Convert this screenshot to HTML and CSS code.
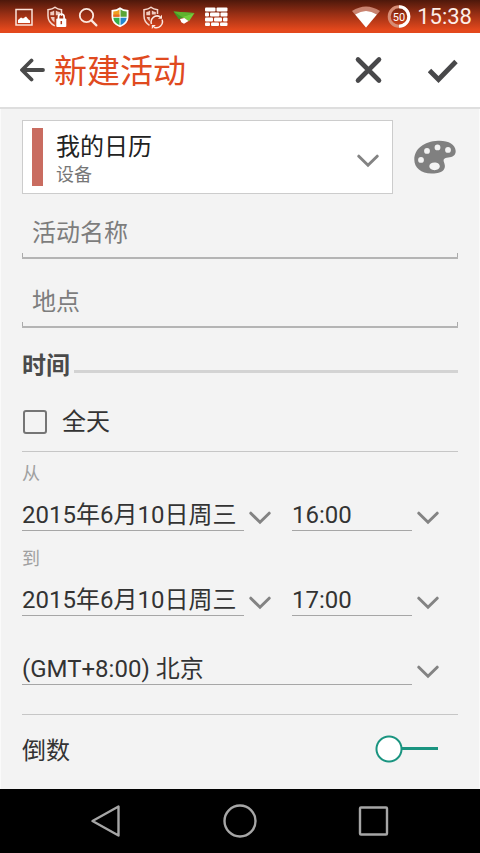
FILE: index.html
```html
<!DOCTYPE html>
<html lang="zh-CN">
<head>
<meta charset="utf-8">
<meta name="viewport" content="width=device-width, initial-scale=1">
<title>新建活动</title>
<link rel="stylesheet" href="styles.css">
</head>
<body>
<svg width="0" height="0" class="defs" aria-hidden="true">
  <symbol id="chevron" viewBox="0 0 22 14"><path d="M1.800 2.200 11 11.200 20.200 2.200" fill="none" stroke="#838383" stroke-width="3" stroke-linecap="round"/></symbol>
</svg>

<div class="status">
  <div class="status-group">
    <svg width="24" height="24" viewBox="0 0 24 24"><rect x="4" y="4.500" width="16" height="15.500" fill="none" stroke="#fbe3da" stroke-width="1.500"/><path d="M6 18v-3l3-2.500 2 1 3-2 2.500 3 1.500 1V18z" fill="#fff"/></svg>
    <svg width="24" height="24" viewBox="0 0 24 24"><path d="M17.500 11V4.700Q13.500 4.300 11 2.200 8.500 4.300 4 4.700V11q0 6.500 6.800 9.800" fill="none" stroke="#f6d9cf" stroke-width="1.500"/><path d="M6.300 7q2.300-.4 3.900-1.500v4.700H6.300zM11.800 5.500q1.600 1.100 4 1.500v3.200h-4zM6.600 12h3.900v5.500Q7.500 15.500 6.600 12z" fill="#f0cbbf"/><rect x="12.300" y="13.500" width="10" height="8.500" rx="1" fill="#fff"/><path d="M14.500 14v-2.200a2.800 2.800 0 0 1 5.600 0V14" fill="none" stroke="#fff" stroke-width="1.700"/><path d="M17.300 16v3.200" stroke="#b53a1a" stroke-width="1.500"/></svg>
    <svg width="24" height="24" viewBox="0 0 24 24"><circle cx="10.500" cy="10.500" r="6.700" fill="none" stroke="#fbe8e0" stroke-width="1.800"/><path d="m15.400 15.400 5 5" stroke="#fbe8e0" stroke-width="2.200" stroke-linecap="round"/></svg>
    <svg width="24" height="24" viewBox="0 0 24 24"><path d="M12 2.300q3 2.500 8.500 2.700V12q0 7-8.500 10.200Q3.500 19 3.500 12V5Q9 4.800 12 2.300z" fill="#fff"/><path d="M11.500 4.500Q9.500 6.300 5.300 6.600v5.200h6.200z" fill="#f0a020"/><path d="M12.500 4.500q2.300 1.800 6.200 2.100v5.200h-6.200z" fill="#5aa536"/><path d="M5.300 12.800h6.200v7.400q-5.700-2.400-6.200-7.400z" fill="#35b04a"/><path d="M18.700 12.800h-6.200v7.400q5.700-2.400 6.200-7.400z" fill="#2487cf"/><path d="M5.300 9.500h6.200v2.300H5.300z" fill="#ea6a28"/></svg>
    <svg width="24" height="24" viewBox="0 0 24 24"><path d="M17.500 9V4.700Q13.500 4.300 11 2.200 8.500 4.300 4 4.700V11q0 6 5.500 9.300" fill="none" stroke="#f6d9cf" stroke-width="1.500"/><path d="M6.300 7q2.300-.4 3.900-1.500v4.700H6.300zM11.800 5.500q1.600 1.100 4 1.500v2.500h-4zM6.600 12h3.200v4.500Q7.300 14.500 6.600 12z" fill="#f0cbbf"/><path d="M11.500 19a6 6 0 0 1 8.500-7.300M22 14.500a6 6 0 0 1-8 7.700" fill="none" stroke="#fbe8e0" stroke-width="1.500"/><path d="M18 13.800h4v-4zM15.800 20h-4v4z" fill="#fbe8e0"/></svg>
    <svg width="24" height="24" viewBox="0 0 24 24"><path d="M1.500 6.500 7 14.300 10 12z" fill="#3b8a1f"/><path d="M1.500 6.500 22.500 8 7 14.300z" fill="#459a26"/><path d="M1.500 6.500 22.500 8 10 12z" fill="#5fb32e"/><path d="m10 12 12.500-4-5.500 8.300z" fill="#72cc3c"/><path d="m8 14 4.300-1 4.200 3-4.500 2.800-2.700-1.500z" fill="#fff"/></svg>
    <svg width="24" height="24" viewBox="0 0 24 24" fill="#fff"><rect x="1" y="2.500" width="10.500" height="4" rx="1"/><rect x="12.500" y="2.500" width="11" height="4" rx="1"/><rect x="1" y="7.500" width="4" height="4" rx="1"/><rect x="6" y="7.500" width="9.500" height="4" rx="1"/><rect x="16.500" y="7.500" width="7" height="4" rx="1"/><rect x="1" y="12.500" width="8" height="4" rx="1"/><rect x="10" y="12.500" width="8" height="4" rx="1"/><rect x="19" y="12.500" width="4.500" height="4" rx="1"/><rect x="1" y="17.500" width="5" height="3.500" rx="1"/><rect x="7" y="17.500" width="8" height="3.500" rx="1"/><rect x="16" y="17.500" width="7.500" height="3.500" rx="1"/></svg>
  </div>
  <div class="status-group status-right">
    <svg width="30" height="24" viewBox="0 0 30 24"><path d="M15 22.500 1 6Q15-3 29 6z" fill="#c98370"/><path d="M15 22.500 4.200 9.500Q15 2.500 25.800 9.500z" fill="#fff"/></svg>
    <svg width="24" height="24" viewBox="0 0 24 24"><circle cx="12" cy="11.500" r="9.800" fill="none" stroke="#d68c75" stroke-width="3"/><path d="M12 1.700a9.800 9.800 0 0 1 0 19.600" fill="none" stroke="#fff" stroke-width="3"/><text x="12" y="15.500" text-anchor="middle" class="battery">50</text></svg>
    <time>15:38</time>
  </div>
</div>

<header>
  <button class="icon-btn" aria-label="返回"><svg width="26" height="24" viewBox="0 0 26 24"><path d="M23 12H2.500M11.500 2.500 2 12l9.500 9.500" fill="none" stroke="#4a4a4a" stroke-width="3.800" stroke-linecap="round" stroke-linejoin="round"/></svg></button>
  <h1>新建活动</h1>
  <button class="icon-btn" aria-label="取消"><svg width="30" height="30" viewBox="0 0 30 30"><path d="m4 4.500 21 21M25 4.500l-21 21" stroke="#48484a" stroke-width="4.600" stroke-linecap="round"/></svg></button>
  <button class="icon-btn" aria-label="完成"><svg width="30" height="30" viewBox="0 0 30 30"><path d="m1.500 15.500 9 9L28 6.500" fill="none" stroke="#48484a" stroke-width="4.800"/></svg></button>
</header>

<main>
  <div class="calendar-row">
    <button class="calendar" aria-haspopup="listbox">
      <span class="swatch"></span>
      <span class="calendar-text"><span class="calendar-name">我的日历</span><span class="calendar-kind">设备</span></span>
      <svg width="22" height="14"><use href="#chevron"/></svg>
    </button>
    <button class="icon-btn" aria-label="颜色"><svg width="42" height="34" viewBox="0 0 42 34"><path fill="#808080" fill-rule="evenodd" d="M24 .8C34 .3 41.500 4.500 41.700 11c.1 4.500-3.200 6-7.500 6.500-4.200.5-5.200 1.800-4.200 4.700.8 2.600 1.500 4.400.2 6.800-2 3.700-7.500 4.600-12.700 4.500C7 33.200.3 28 .3 19.500.3 9 10 1.500 24 .8zM23.500 4.500a2.900 2.900 0 1 0 .01 5.800 2.900 2.900 0 0 0-.01-5.800zM34 7a2.900 2.900 0 1 0 .01 5.800A2.900 2.900 0 0 0 34 7zM13 8a2.900 2.900 0 1 0 .01 5.800A2.900 2.900 0 0 0 13 8zM7 17a2.900 2.900 0 1 0 .01 5.800A2.900 2.900 0 0 0 7 17zm13.500 5.500c-3 0-5.200 1.500-5.200 3.800s2.200 3.900 5.200 3.900 5.300-1.600 5.300-3.900-2.300-3.800-5.300-3.800z"/></svg></button>
  </div>

  <input class="field" type="text" placeholder="活动名称" aria-label="活动名称">
  <input class="field" type="text" placeholder="地点" aria-label="地点">

  <h2>时间</h2>

  <label class="all-day"><input type="checkbox"><span>全天</span></label>

  <label class="caption" for="from-date">从</label>
  <div class="when">
    <div class="picker"><select id="from-date"><option>2015年6月10日周三</option></select><svg width="22" height="14"><use href="#chevron"/></svg></div>
    <div class="picker"><select aria-label="开始时间"><option>16:00</option></select><svg width="22" height="14"><use href="#chevron"/></svg></div>
  </div>

  <label class="caption" for="to-date">到</label>
  <div class="when">
    <div class="picker"><select id="to-date"><option>2015年6月10日周三</option></select><svg width="22" height="14"><use href="#chevron"/></svg></div>
    <div class="picker"><select aria-label="结束时间"><option>17:00</option></select><svg width="22" height="14"><use href="#chevron"/></svg></div>
  </div>

  <div class="picker zone"><select aria-label="时区"><option>(GMT+8:00) 北京</option></select><svg width="22" height="14"><use href="#chevron"/></svg></div>

  <label class="countdown"><span>倒数</span><input type="checkbox" role="switch"></label>
</main>

<nav>
  <button class="icon-btn" aria-label="后退"><svg width="36" height="36" viewBox="0 0 36 36"><path d="M29.500 3.500v29L3.500 18z" fill="none" stroke="#a6a6a6" stroke-width="2.400" stroke-linejoin="round"/></svg></button>
  <button class="icon-btn" aria-label="主屏幕"><svg width="36" height="36" viewBox="0 0 36 36"><circle cx="18" cy="18" r="15.500" fill="none" stroke="#a6a6a6" stroke-width="2.400"/></svg></button>
  <button class="icon-btn" aria-label="最近任务"><svg width="36" height="36" viewBox="0 0 36 36"><rect x="5" y="4.500" width="27" height="27" rx="1" fill="none" stroke="#a6a6a6" stroke-width="2.400"/></svg></button>
</nav>
</body>
</html>
```
FILE: styles.css
```css
* {
  box-sizing: border-box;
}

body {
  margin: 0;
  min-height: 100vh;
  display: flex;
  flex-direction: column;
  background: #f3f3f3;
  color: #333;
  font-family: Roboto, "Noto Sans CJK SC", sans-serif;
  font-size: 24px;
}

button, input, select {
  font: inherit;
  color: inherit;
  margin: 0;
}

svg {
  display: block;
  flex: none;
}

.defs {
  position: absolute;
}

.icon-btn {
  display: flex;
  padding: 0;
  border: 0;
  background: none;
}

/* status bar */
.status {
  height: 33px;
  padding: 0 8px 0 12px;
  display: flex;
  align-items: center;
  justify-content: space-between;
  background: linear-gradient(#4d180b, #9c3015 45%, #e3481c 90%);
}

.status-group {
  display: flex;
  align-items: center;
  gap: 8px;
}

.status-right {
  gap: 6px;
  color: #fdeee8;
  font-size: 22px;
}

.battery {
  fill: #fff;
  font-size: 11px;
}

/* title bar */
header {
  height: 76px;
  padding: 0 22px 0 20px;
  display: flex;
  align-items: center;
  background: #fff;
  border-bottom: 2px solid #dedede;
}

h1 {
  flex: 1;
  margin: 0 0 0 8px;
  padding-top: 4px;
  color: #e04a1f;
  font-size: 33px;
  font-weight: 400;
  line-height: 40px;
}

header .icon-btn:last-child {
  margin-left: 44px;
}

/* form */
main {
  flex: 1;
  padding: 11px 21px 0;
  border: solid #fafafa;
  border-width: 0 1px;
}

.calendar-row {
  display: flex;
  align-items: center;
  gap: 21px;
  padding-right: 2px;
  margin-bottom: 13px;
}

.calendar {
  flex: 1;
  height: 74px;
  padding: 7px 13px 7px 9px;
  display: flex;
  align-items: center;
  background: #fff;
  border: 1px solid #ccc;
  text-align: left;
}

.calendar svg {
  margin-top: 8px;
}

.swatch {
  width: 11px;
  align-self: stretch;
  background: #c96c60;
}

.calendar-text {
  flex: 1;
  display: flex;
  flex-direction: column;
  padding-top: 4px;
  margin-left: 13px;
}

.calendar-name {
  color: #222;
  line-height: 32px;
}

.calendar-kind {
  color: #777;
  font-size: 18px;
  line-height: 24px;
}

.field {
  display: block;
  width: 100%;
  height: 52px;
  margin-bottom: 17px;
  padding: 2px 10px 0;
  border: 0;
  border-bottom: 2px solid #b4b4b4;
  border-radius: 0;
  background:
    linear-gradient(#aaa, #aaa) left bottom / 1px 4px no-repeat,
    linear-gradient(#aaa, #aaa) right bottom / 1px 4px no-repeat;
}

.field::placeholder {
  color: #7d7d7d;
  opacity: 1;
}

h2 {
  display: flex;
  align-items: center;
  gap: 4px;
  margin: 20px 0 9px;
  color: #4a4a4a;
  font-size: 24px;
  font-weight: 700;
  line-height: 36px;
}

h2::after {
  content: "";
  flex: 1;
  height: 3px;
  margin-top: 10px;
  background: #d3d3d3;
}

.all-day {
  height: 59px;
  display: flex;
  align-items: center;
  gap: 15px;
  border-bottom: 1px solid #c6c6c6;
}

.all-day span {
  line-height: 34px;
}

.all-day input {
  appearance: none;
  width: 24px;
  height: 24px;
  margin-left: 1px;
  border: 2px solid #757575;
  border-radius: 3px;
}

.caption {
  display: block;
  padding-top: 8px;
  color: #a0a0a0;
  font-size: 18px;
  line-height: 28px;
}

.when {
  display: grid;
  grid-template-columns: 249fr 147fr;
  gap: 21px;
  padding: 8px 19px 0 0;
  margin-bottom: 6px;
}

.picker {
  display: flex;
  align-items: center;
  gap: 5px;
}

.picker svg {
  margin-top: 8px;
}

select {
  flex: 1;
  min-width: 0;
  height: 35px;
  padding: 4px 0 0;
  appearance: none;
  border: 0;
  border-bottom: 1px solid #a6a6a6;
  border-radius: 0;
  background: none;
}

.zone {
  padding-right: 19px;
  margin: 34px 0 29px;
}

.countdown {
  height: 70px;
  padding: 0 20px 2px 0;
  display: flex;
  align-items: center;
  justify-content: space-between;
  border-top: 1px solid #c6c6c6;
}

/* switch: a ring on the left end of its track */
.countdown input {
  appearance: none;
  width: 63px;
  height: 28px;
  background:
    radial-gradient(circle at 14px 14px, #fff 11px, #1a9480 12px, #1a9480 13px, transparent 14px),
    linear-gradient(#1a9480, #1a9480) right center / 37px 3px no-repeat;
}

/* system navigation */
nav {
  height: 64px;
  padding: 0 89px;
  display: flex;
  align-items: center;
  justify-content: space-between;
  background: #000;
}
```
